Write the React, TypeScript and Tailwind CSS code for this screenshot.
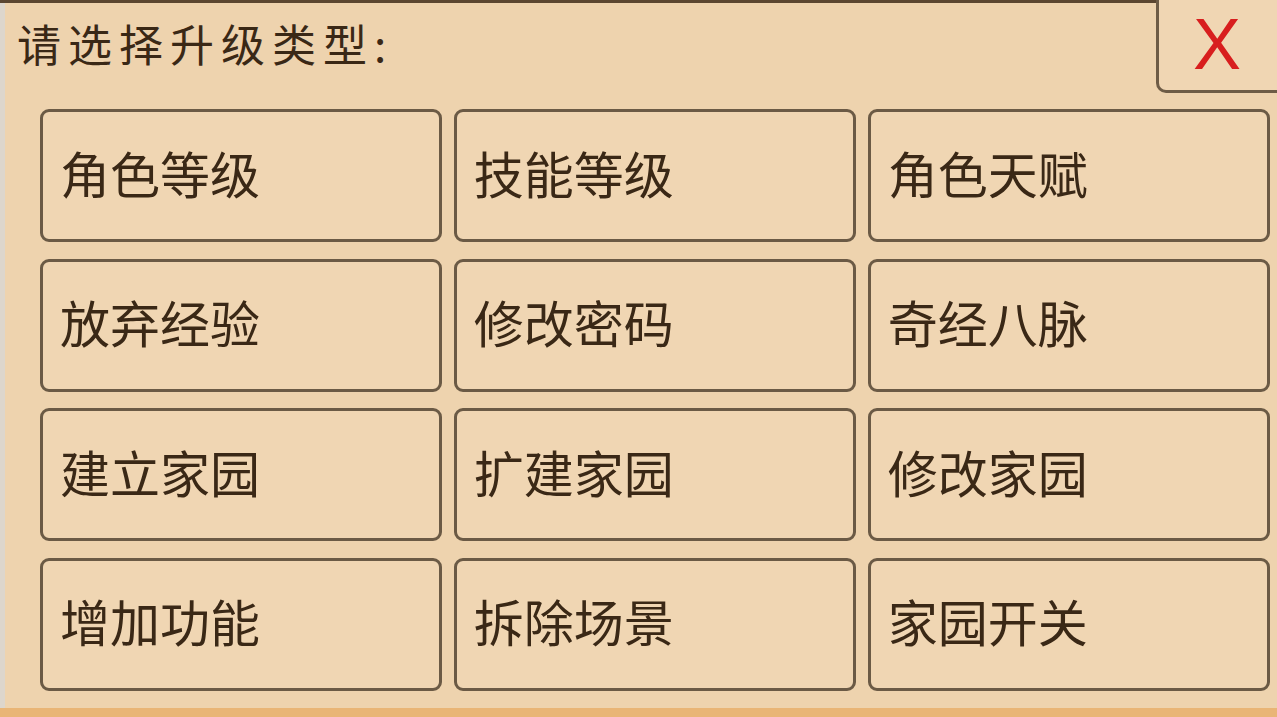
import React from "react";

const items = [
  "角色等级", "技能等级", "角色天赋",
  "放弃经验", "修改密码", "奇经八脉",
  "建立家园", "扩建家园", "修改家园",
  "增加功能", "拆除场景", "家园开关",
];

const cjk = { fontFamily: '"Noto Sans CJK SC", "Noto Sans", sans-serif' };

export default function App() {
  return (
    <div
      className="w-[1277px] h-[717px] overflow-hidden bg-[#eed3ae] flex flex-col relative text-[#3a2816]"
      style={cjk}
    >
      {/* top frame line */}
      <div className="h-[3px] bg-[#5b4630] shrink-0" />

      <div className="flex flex-1 min-h-0">
        {/* left edge */}
        <div className="w-[5px] bg-[#ddd6cc] shrink-0" />

        <div className="flex-1 flex flex-col">
          {/* header */}
          <div className="h-[106px] flex items-start justify-between shrink-0">
            <h1 className="text-[44px] leading-none tracking-[7px] font-normal mt-[18px] ml-[12px]">
              请选择升级类型:
            </h1>
            <button className="w-[121px] h-[93px] -mt-[3px] border-l-[3px] border-b-[3px] border-[#6e5c46] rounded-bl-[10px] bg-[#f0d6b3] flex items-center justify-center">
              <span
                className="text-[#d81e1e] text-[72px] leading-none -mt-[2px] mr-[2px]"
                style={{ fontFamily: '"Liberation Sans", Arial, sans-serif' }}
              >
                X
              </span>
            </button>
          </div>

          {/* option grid */}
          <div className="ml-[35px] w-[1230px] grid grid-cols-3 gap-x-[11.5px] gap-y-[16.5px]">
            {items.map((t) => (
              <button
                key={t}
                className="h-[133px] border-[3px] border-[#6b5a45] rounded-[9px] bg-[#f0d6b3] flex items-center pl-[17px] pb-[8px] text-left"
              >
                <span className="text-[50px] leading-none font-normal">{t}</span>
              </button>
            ))}
          </div>
        </div>
      </div>

      {/* bottom frame strip */}
      <div className="h-[9px] bg-[#e9b576] shrink-0" />
    </div>
  );
}
